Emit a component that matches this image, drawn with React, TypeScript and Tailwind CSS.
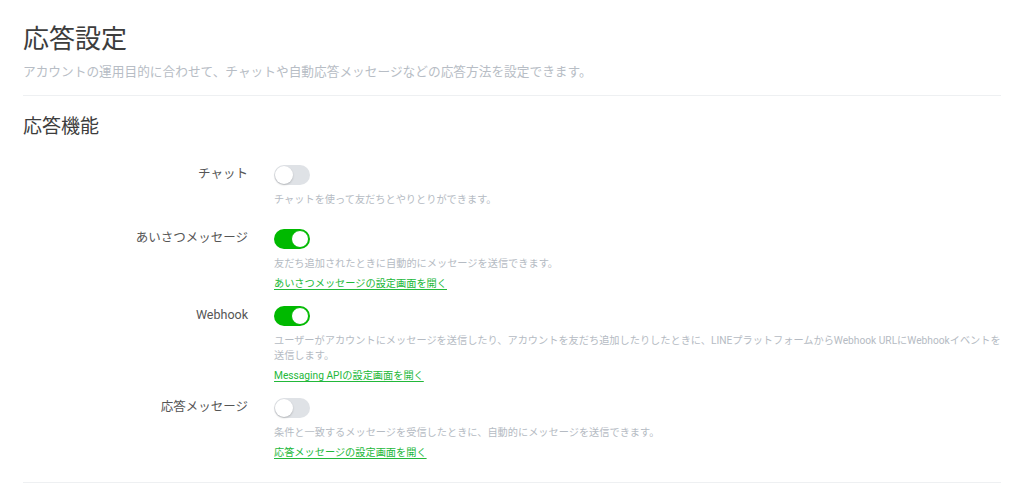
import { useState } from 'react';

type Row = {
  id: string;
  label: string;
  enabled: boolean;
  description: string;
  link?: string;
};

const rows: Row[] = [
  {
    id: 'chat',
    label: 'チャット',
    enabled: false,
    description: 'チャットを使って友だちとやりとりができます。',
  },
  {
    id: 'greeting',
    label: 'あいさつメッセージ',
    enabled: true,
    description: '友だち追加されたときに自動的にメッセージを送信できます。',
    link: 'あいさつメッセージの設定画面を開く',
  },
  {
    id: 'webhook',
    label: 'Webhook',
    enabled: true,
    description:
      'ユーザーがアカウントにメッセージを送信したり、アカウントを友だち追加したりしたときに、LINEプラットフォームからWebhook URLにWebhookイベントを送信します。',
    link: 'Messaging APIの設定画面を開く',
  },
  {
    id: 'auto-reply',
    label: '応答メッセージ',
    enabled: false,
    description: '条件と一致するメッセージを受信したときに、自動的にメッセージを送信できます。',
    link: '応答メッセージの設定画面を開く',
  },
];

function Toggle({ on, onChange }: { on: boolean; onChange: () => void }) {
  return (
    <button
      onClick={onChange}
      className={
        on
          ? 'relative block w-[36px] h-[20px] rounded-full bg-[#00b900] transition-colors'
          : 'relative block w-[36px] h-[20px] rounded-full bg-[#dfe2e6] transition-colors'
      }
    >
      <span
        className={
          on
            ? 'absolute top-[1px] left-[17px] w-[18px] h-[18px] rounded-full bg-white border border-[#00b900] transition-all'
            : 'absolute top-[1px] left-[1px] w-[18px] h-[18px] rounded-full bg-white shadow-[0_1px_2px_rgba(0,0,0,0.2)] transition-all'
        }
      />
    </button>
  );
}

export default function App() {
  const [state, setState] = useState<Record<string, boolean>>(() =>
    Object.fromEntries(rows.map((r) => [r.id, r.enabled])),
  );

  return (
    <div
      className="bg-white w-[1024px] h-[500px] px-[23px] pt-[24px] text-[#3c3c3c]"
      style={{ fontFamily: 'Roboto, "Noto Sans CJK JP", sans-serif' }}
    >
      {/* ページ見出し */}
      <h1 className="text-[26px] leading-[31px] font-normal text-[#3d3d3d]">応答設定</h1>
      <p className="mt-[7px] text-[12.7px] leading-[20px] text-[#b7bdc5]">
        アカウントの運用目的に合わせて、チャットや自動応答メッセージなどの応答方法を設定できます。
      </p>
      <div className="mt-[13px] border-t border-[#eef0f2]" />

      {/* 応答機能 */}
      <h2 className="mt-[17px] text-[19px] leading-[28px] font-normal text-[#3d3d3d]">応答機能</h2>

      <div className="mt-[24px] flex flex-col gap-[15px]">
        {rows.map((row, i) => (
          <div key={row.id} className={i === 0 ? 'flex pb-[7px]' : 'flex'}>
            <div className="w-[225px] shrink-0 text-right text-[12.5px] leading-[18px] text-[#555]">
              {row.label}
            </div>
            <div className="ml-[26px] flex-1">
              <Toggle
                on={state[row.id]}
                onChange={() => setState((s) => ({ ...s, [row.id]: !s[row.id] }))}
              />
              <p className="mt-[7px] text-[10.2px] leading-[15px] text-[#b5bbc3]">{row.description}</p>
              {row.link && (
                <a
                  href="#"
                  className="mt-[6px] block w-fit text-[10.2px] leading-[14px] text-[#22b83a] underline underline-offset-2"
                >
                  {row.link}
                </a>
              )}
            </div>
          </div>
        ))}
      </div>

      <div className="mt-[22px] border-t border-[#eef0f2]" />
    </div>
  );
}
